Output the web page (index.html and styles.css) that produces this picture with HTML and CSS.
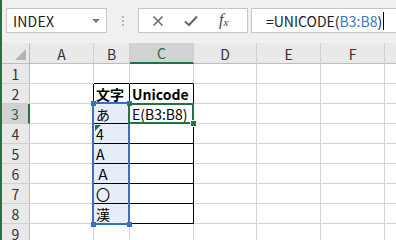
FILE: index.html
```html
<!DOCTYPE html>
<html lang="ja">
<head>
<meta charset="utf-8">
<link rel="stylesheet" href="styles.css">
</head>
<body>
<div class="app">
  <div class="toolbar">
    <div class="namebox"><span class="nametext">INDEX</span><span class="caret"></span></div>
    <div class="grip"><i></i><i></i><i></i></div>
    <div class="btnbox">
      <svg class="ico" width="12" height="12" viewBox="0 0 12 12"><path d="M1.5 1.5L10.5 10.5M10.5 1.5L1.5 10.5" stroke="#6b6b6b" stroke-width="1.6" fill="none"/></svg>
      <svg class="ico" width="14" height="12" viewBox="0 0 14 12"><path d="M1 6.5L5 10L13 1.5" stroke="#6b6b6b" stroke-width="2.2" fill="none"/></svg>
      <span class="fx">f<sub>x</sub></span>
    </div>
    <div class="formula"><span>=UNICODE(</span><span class="ref">B3:B8</span><span>)</span><span class="cursor"></span></div>
  </div>
  <div class="sheet">
    <div class="corner"><span class="tri"></span></div>
    <div class="ch">A</div><div class="ch">B</div><div class="ch sel">C</div><div class="ch">D</div><div class="ch">E</div><div class="ch">F</div><div class="ch last"></div>

    <div class="rh">1</div><div class="c"></div><div class="c bb"></div><div class="c bb"></div><div class="c"></div><div class="c"></div><div class="c"></div><div class="c last"></div>

    <div class="rh">2</div><div class="c br"></div><div class="c t bold">文字</div><div class="c t bold">Unicode</div><div class="c"></div><div class="c"></div><div class="c"></div><div class="c last"></div>

    <div class="rh sel">3</div><div class="c br"></div><div class="c t hl">あ</div><div class="c t">E(B3:B8)</div><div class="c"></div><div class="c"></div><div class="c"></div><div class="c last"></div>

    <div class="rh">4</div><div class="c br"></div><div class="c t hl err">4</div><div class="c t"></div><div class="c"></div><div class="c"></div><div class="c"></div><div class="c last"></div>

    <div class="rh">5</div><div class="c br"></div><div class="c t hl">A</div><div class="c t"></div><div class="c"></div><div class="c"></div><div class="c"></div><div class="c last"></div>

    <div class="rh">6</div><div class="c br"></div><div class="c t hl">Ａ</div><div class="c t"></div><div class="c"></div><div class="c"></div><div class="c"></div><div class="c last"></div>

    <div class="rh">7</div><div class="c br"></div><div class="c t hl">〇</div><div class="c t"></div><div class="c"></div><div class="c"></div><div class="c"></div><div class="c last"></div>

    <div class="rh">8</div><div class="c br"></div><div class="c t hl">漢</div><div class="c t"></div><div class="c"></div><div class="c"></div><div class="c"></div><div class="c last"></div>

    <div class="rh">9</div><div class="c"></div><div class="c"></div><div class="c"></div><div class="c"></div><div class="c"></div><div class="c"></div><div class="c last"></div>

    <div class="selbox"></div>
    <div class="handle h1"></div><div class="handle h2"></div><div class="handle h3"></div><div class="handle h4"></div>
    <div class="active"></div>
    <div class="fill"></div>
  </div>
</div>
</body>
</html>
```

FILE: styles.css
```css
html, body {
  margin: 0;
  padding: 0;
  background: #ffffff;
}
body {
  width: 396px;
  height: 240px;
  overflow: hidden;
  font-family: "Noto Sans CJK JP", "Noto Sans", sans-serif;
  font-size: 14px;
  color: #000;
}
.app {
  border-left: 2px solid #217346;
  height: 240px;
  box-sizing: border-box;
}
.toolbar {
  height: 43px;
  background: #f0f0f0;
  display: flex;
  align-items: flex-start;
  padding-top: 8px;
  padding-left: 4px;
  box-sizing: border-box;
}
.namebox {
  width: 101px;
  height: 25px;
  box-sizing: border-box;
  background: #fff;
  border: 1px solid #c6c6c6;
  display: flex;
  align-items: center;
  justify-content: space-between;
  padding: 0 6px 0 6px;
}
.nametext {
  font-size: 14px;
  color: #222;
  letter-spacing: 0.2px;
}
.caret {
  width: 0;
  height: 0;
  border-left: 4px solid transparent;
  border-right: 4px solid transparent;
  border-top: 4px solid #777;
}
.grip {
  width: 31px;
  height: 25px;
  display: flex;
  flex-direction: column;
  align-items: center;
  justify-content: center;
  gap: 2px;
}
.grip i {
  display: block;
  width: 2px;
  height: 2px;
  background: #b5b5b5;
}
.btnbox {
  width: 110px;
  height: 25px;
  box-sizing: border-box;
  background: #fff;
  border: 1px solid #c6c6c6;
  display: flex;
  align-items: center;
  padding-left: 13px;
}
.btnbox .ico:nth-child(1) { margin-right: 20px; }
.btnbox .ico:nth-child(2) { margin-right: 21px; }
.fx {
  font-family: "Liberation Serif", serif;
  font-style: italic;
  font-size: 16px;
  color: #444;
  line-height: 16px;
}
.fx sub {
  font-size: 11px;
  vertical-align: -1px;
}
.formula {
  margin-left: 3px;
  flex: 1;
  height: 25px;
  box-sizing: border-box;
  background: #fff;
  border: 1px solid #c6c6c6;
  border-right: none;
  display: flex;
  align-items: center;
  padding-left: 14px;
  font-size: 14px;
  color: #222;
  white-space: nowrap;
}
.ref { color: #3c78c8; }
.cursor {
  display: inline-block;
  width: 1px;
  height: 18px;
  background: #000;
  margin-left: 1px;
}
.sheet {
  position: relative;
  display: grid;
  grid-template-columns: 28px 64px 36px 64px 63px 64px 64px 1fr;
  grid-template-rows: 21px repeat(9, 20px);
}
.corner, .ch, .rh {
  background: #e9e9e9;
  box-sizing: border-box;
  color: #333;
  display: flex;
  align-items: center;
  justify-content: center;
}
.corner {
  border-right: 1px solid #bcbcbc;
  border-bottom: 1px solid #bcbcbc;
  position: relative;
}
.tri {
  position: absolute;
  right: 3px;
  bottom: 3px;
  width: 0;
  height: 0;
  border-left: 11px solid transparent;
  border-bottom: 11px solid #b4b4b4;
}
.ch {
  border-right: 1px solid #cfcfcf;
  border-bottom: 1px solid #bcbcbc;
  padding-top: 1px;
}
.ch.sel {
  background: #d2d2d2;
  border-bottom: 2px solid #217346;
  color: #1f6b43;
}
.rh {
  border-right: 1px solid #bcbcbc;
  border-bottom: 1px solid #cfcfcf;
}
.rh.sel {
  background: #d2d2d2;
  border-right: 2px solid #217346;
  color: #1f6b43;
}
.c {
  box-sizing: border-box;
  border-right: 1px solid #d4d4d4;
  border-bottom: 1px solid #d4d4d4;
  display: flex;
  align-items: flex-end;
  padding: 0 0 0 2px;
  line-height: 18px;
  white-space: nowrap;
  overflow: hidden;
  position: relative;
}
.c.last, .ch.last { border-right: none; }
.c.bb { border-bottom-color: #000; }
.c.br { border-right-color: #000; }
.c.t {
  border-right-color: #000;
  border-bottom-color: #000;
}
.c.bold { font-weight: bold; }
.c.hl { background: #e8eef9; }
.err::before {
  content: "";
  position: absolute;
  left: 1px;
  top: 1px;
  width: 0;
  height: 0;
  border-top: 6px solid #217346;
  border-right: 6px solid transparent;
}
.selbox {
  position: absolute;
  left: 90px;
  top: 59px;
  width: 38px;
  height: 123px;
  box-sizing: border-box;
  border: 2px solid #3a6ec0;
}
.handle {
  position: absolute;
  width: 5px;
  height: 5px;
  background: #3a6ec0;
}
.h1 { left: 89px; top: 58px; }
.h2 { left: 125px; top: 58px; }
.h3 { left: 89px; top: 179px; }
.h4 { left: 125px; top: 179px; }
.active {
  position: absolute;
  left: 126px;
  top: 60px;
  width: 66px;
  height: 21px;
  box-sizing: border-box;
  border: 2px solid #217346;
}
.fill {
  position: absolute;
  left: 188px;
  top: 77px;
  width: 5px;
  height: 5px;
  background: #217346;
  border: 1px solid #fff;
}
```
